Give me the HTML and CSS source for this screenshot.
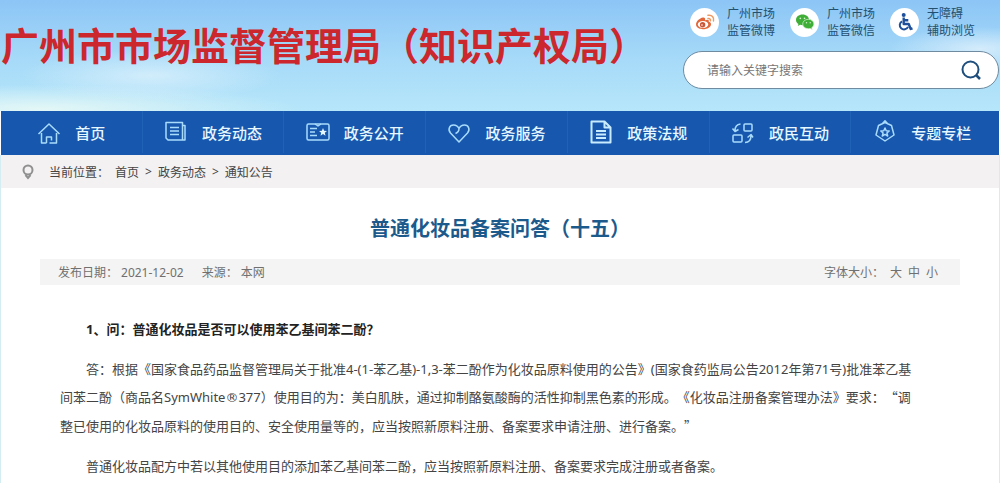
FILE: index.html
```
<!DOCTYPE html>
<html lang="zh-CN">
<head>
    <meta charset="UTF-8">
    <meta name="viewport" content="width=device-width, initial-scale=1.0">
    <title>普通化妆品备案问答（十五）</title>
    <link rel="stylesheet" href="styles.css">
</head>
<body>
    <header class="header">
        <div class="site-name">广州市市场监督管理局（知识产权局）</div>
        <div class="tools">
            <div class="social">
                <a href="#" class="social-link">
                    <span class="social-icon">
                        <svg width="22" height="22" viewBox="0 0 22 22" fill="none">
                            <path d="M9 6.500C5.500 7 2 10.500 2 13.500c0 3 3.500 4.700 7 4.700 4.500 0 8-2.300 8-5 0-1.500-1-2.200-2.300-2.500.6-1.600-.5-2.800-3.700-1.500.5-1.700-.2-2.900-2-2.700z" fill="#e2673a"/>
                            <ellipse cx="9" cy="13.500" rx="5.200" ry="3.400" fill="#fff"/>
                            <circle cx="8.600" cy="13.700" r="2.700" fill="#c9573a"/>
                            <circle cx="8" cy="14" r=".8" fill="#fff"/>
                            <path d="M14 7.500c1.800-.3 2.800.8 2.400 2.300M14 4.300c3.800-.8 6.400 2 5.500 5.600" stroke="#ee9a62" stroke-width="1.500" stroke-linecap="round"/>
                        </svg>
                    </span>
                    <span>广州市场<br>监管微博</span>
                </a>
                <a href="#" class="social-link">
                    <span class="social-icon">
                        <svg width="22" height="22" viewBox="0 0 22 22">
                            <path d="M8.500 3.500C4.800 3.500 2 5.900 2 8.900c0 1.700.9 3.100 2.400 4.100l-.6 2 2.300-1.200c.8.2 1.600.4 2.400.4 3.700 0 6.500-2.400 6.500-5.300 0-3-2.800-5.400-6.500-5.400z" fill="#3fae36"/>
                            <path d="M14.300 8.300c-3.200 0-5.600 2.100-5.600 4.700s2.400 4.700 5.600 4.700c.7 0 1.300-.1 1.900-.3l2 1.100-.5-1.800c1.400-.9 2.200-2.200 2.200-3.700 0-2.600-2.400-4.700-5.600-4.700z" fill="#3fae36" stroke="#d9f2d2" stroke-width=".7"/>
                            <circle cx="6.300" cy="7.400" r=".8" fill="#d9f2d2"/>
                            <circle cx="10.500" cy="7.400" r=".8" fill="#d9f2d2"/>
                            <circle cx="12.500" cy="11.800" r=".7" fill="#d9f2d2"/>
                            <circle cx="16.200" cy="11.800" r=".7" fill="#d9f2d2"/>
                        </svg>
                    </span>
                    <span>广州市场<br>监管微信</span>
                </a>
                <a href="#" class="social-link">
                    <span class="social-icon">
                        <svg width="22" height="22" viewBox="0 0 22 22" fill="none" stroke="#1d4f9c" stroke-width="2.400" stroke-linejoin="round">
                            <circle cx="9.700" cy="4" r="2" fill="#1d4f9c" stroke="none"/>
                            <path d="M9.700 6.500v6.500h5l2 5 1.800-.7M10 9.300h4.300"/>
                            <path d="M8 10.300a4.300 4.300 0 1 0 6 5.500" stroke-width="2"/>
                        </svg>
                    </span>
                    <span>无障碍<br>辅助浏览</span>
                </a>
            </div>
            <form class="search">
                <input type="text" class="search-input" placeholder="请输入关键字搜索" aria-label="请输入关键字搜索">
                <button type="button" class="search-btn" aria-label="搜索">
                    <svg width="22" height="22" viewBox="0 0 22 22" fill="none" stroke="#1f4e7d" stroke-width="2">
                        <circle cx="10.500" cy="10.500" r="8"/>
                        <path d="M16 16l4 4" stroke-width="2.500"/>
                    </svg>
                </button>
            </form>
        </div>
    </header>

    <nav class="nav">
        <a href="#" class="nav-item">
            <svg class="nav-icon" viewBox="0 0 24 24">
                <path d="M1.500 14L12 4l10.500 10M4.500 13v10h5M19.500 13v10h-7M9.500 23v-6h5v3.500"/>
            </svg>
            首页
        </a>
        <a href="#" class="nav-item">
            <svg class="nav-icon" viewBox="0 0 24 24">
                <path d="M2 2.500h16.500V20H4l-2-2zM18.500 5.500H21V20h-3M6 7.500h9M6 11h9M6 14.500h9"/>
            </svg>
            政务动态
        </a>
        <a href="#" class="nav-item">
            <svg class="nav-icon" viewBox="0 0 24 24">
                <rect x="1" y="4" width="22" height="16" rx="1.500"/>
                <path d="M4 8.500h7M4 12h5M4 15.500h7M9 4l3 2 3-2"/>
                <path class="solid" d="M17 8l1.100 2.700 2.900.2-2.200 1.900.7 2.900-2.500-1.600-2.500 1.600.7-2.900-2.200-1.900 2.900-.2z"/>
            </svg>
            政务公开
        </a>
        <a href="#" class="nav-item">
            <svg class="nav-icon" viewBox="0 0 24 24">
                <path d="M12 22L3.500 13C.5 9.500 2.500 5 6.500 5c2.500 0 4.500 1.500 5.500 3.500C13 6.500 15 5 17.500 5c4 0 6 4.500 3 8zM12 8.500c0 2.500-1 4-3.500 5"/>
            </svg>
            政务服务
        </a>
        <a href="#" class="nav-item">
            <svg class="nav-icon bold" viewBox="0 0 24 24">
                <path d="M2.500 1.500h13l6 6v15h-19zM15.500 1.500v6h6M7 11h10M7 14.500h10M7 18h10"/>
            </svg>
            政策法规
        </a>
        <a href="#" class="nav-item">
            <svg class="nav-icon" viewBox="0 0 24 24">
                <rect x="13" y="4" width="8" height="7" rx="1"/>
                <rect x="2" y="15" width="9" height="7" rx="1"/>
                <path d="M9.500 4C6 4.500 4 7 4 10.500M1.500 8.500L4 11.500l3.500-2M14 22.500c4 0 6-2.500 6-7M16.500 17.500L20 14.500l2 3"/>
            </svg>
            政民互动
        </a>
        <a href="#" class="nav-item">
            <svg class="nav-icon" viewBox="0 0 24 24">
                <path d="M12 2.500L5.500 5.500 3 15l9 6 9-6-2.500-9.500zM9.500 3.500L12 .8l2.500 2.700"/>
                <path d="M12 8l1.200 2.800 3 .2-2.300 2 .8 3-2.700-1.600L9.300 16l.8-3-2.300-2 3-.2z"/>
            </svg>
            专题专栏
        </a>
    </nav>

    <div class="page">
        <div class="breadcrumb">
            <svg class="pin" width="14" height="16" viewBox="0 0 14 16" fill="none" stroke="#909090" stroke-width="2">
                <circle cx="7" cy="6" r="4.500"/>
                <path d="M4.500 11L7 14l2.500-3"/>
            </svg>
            <span class="breadcrumb-label">当前位置：</span>
            <a href="#">首页</a>
            <span>&gt;</span>
            <a href="#">政务动态</a>
            <span>&gt;</span>
            <a href="#">通知公告</a>
        </div>

        <main class="article">
            <h1 class="article-title">普通化妆品备案问答（十五）</h1>
            <div class="meta">
                <span>发布日期：</span>
                <span class="meta-date">2021-12-02</span>
                <span>来源：</span>
                <span>本网</span>
                <div class="font-size">
                    <span>字体大小：</span>
                    <a href="#">大</a>
                    <a href="#">中</a>
                    <a href="#">小</a>
                </div>
            </div>
            <div class="content">
                <p><strong>1、问：普通化妆品是否可以使用苯乙基间苯二酚？</strong></p>
                <p>答：根据《国家食品药品监督管理局关于批准4-(1-苯乙基)-1,3-苯二酚作为化妆品原料使用的公告》(国家食药监局公告2012年第71号)批准苯乙基<br>间苯二酚（商品名SymWhite<span class="mark">®</span>377）使用目的为：美白肌肤，通过抑制酪氨酸酶的活性抑制黑色素的形成。《化妆品注册备案管理办法》要求：<span class="quote">“</span>调<br>整已使用的化妆品原料的使用目的、安全使用量等的，应当按照新原料注册、备案要求申请注册、进行备案。<span class="quote">”</span></p>
                <p>普通化妆品配方中若以其他使用目的添加苯乙基间苯二酚，应当按照新原料注册、备案要求完成注册或者备案。</p>
            </div>
        </main>
    </div>
</body>
</html>
```
FILE: styles.css
```
* {
    box-sizing: border-box;
}
body {
    margin: 0;
    font-family: "Noto Sans", "Noto Sans CJK SC", sans-serif;
    font-size: 12px;
    color: #444;
    background: #fff;
    text-spacing-trim: space-all;
}
a {
    color: inherit;
    text-decoration: none;
}

/* header */
.header {
    display: flex;
    justify-content: space-between;
    height: 111px;
    background:
        radial-gradient(ellipse 130px 26px at 15% 68%, rgba(225, 243, 252, 0.7), transparent),
        radial-gradient(ellipse 260px 24px at 4% 98%, rgba(232, 249, 246, 0.9), transparent),
        radial-gradient(ellipse 90px 22px at 98% 44%, rgba(225, 241, 252, 0.8), transparent),
        linear-gradient(#8cc5f6, #a5d9f8 50%, #b6e6fa);
}
.site-name {
    padding: 16px 0 0 1px;
    font-family: "Noto Sans CJK SC", sans-serif;
    font-size: 38px;
    font-weight: 700;
    line-height: 56px;
    white-space: nowrap;
    color: #cc272d;
}
.tools {
    width: 317px;
    padding-right: 1px;
}
.social {
    display: grid;
    grid-template-columns: repeat(3, 100px);
    padding: 5px 0 0 7px;
}
.social-link {
    display: flex;
    align-items: center;
    gap: 8px;
    line-height: 17px;
    white-space: nowrap;
    color: #24506f;
}
.social-icon {
    display: flex;
    align-items: center;
    justify-content: center;
    width: 29px;
    height: 29px;
    border-radius: 50%;
    background: #fff;
}
.search {
    display: flex;
    align-items: center;
    height: 38px;
    margin: 12px 0 0;
    padding: 0 16px 0 23px;
    border: 1px solid #6f8ba0;
    border-radius: 19px;
    background: #fff;
}
.search-input {
    flex: 1;
    min-width: 0;
    padding: 0;
    border: 0;
    outline: 0;
    font: inherit;
    background: none;
}
.search-input::placeholder {
    color: #777;
}
.search-btn {
    display: flex;
    padding: 0;
    border: 0;
    background: none;
    cursor: pointer;
}

/* main nav */
.nav {
    display: grid;
    grid-template-columns: repeat(7, 1fr);
    height: 44px;
    margin: 0 1px;
    padding: 0 6px 2px 0;
    background: #1758ae;
}
.nav-item {
    display: flex;
    align-items: center;
    justify-content: center;
    gap: 14px;
    font-size: 15px;
    font-weight: 500;
    color: #e6f7ff;
    border-right: 1px solid #2062b6;
}
.nav-item:last-child {
    border-right: 0;
}
.nav-icon {
    width: 24px;
    height: 24px;
    fill: none;
    stroke: #a9dbfb;
    stroke-width: 1.5;
    stroke-linejoin: round;
}
.nav-icon.bold {
    stroke: #c9ebff;
    stroke-width: 2;
}
.nav-icon .solid {
    fill: #e6f7ff;
    stroke: none;
}

/* page */
.page {
    border: solid #d3edf3;
    border-width: 0 1px;
}
.breadcrumb {
    display: flex;
    align-items: center;
    gap: 6px;
    height: 33px;
    padding: 0 20px;
    background: #f3f1f2;
}
.pin {
    margin-right: 8px;
}
.article {
    padding: 26px 39px 4px;
}
.article-title {
    margin: 0;
    font-size: 20px;
    line-height: 30px;
    text-align: center;
    color: #1d5a8c;
}
.meta {
    display: flex;
    align-items: center;
    gap: 3px;
    height: 26px;
    margin-top: 15px;
    padding: 0 22px 0 18px;
    color: #707070;
    background: #f4f4f4;
}
.meta-date {
    margin-right: 15px;
}
.font-size {
    display: flex;
    gap: 6px;
    margin-left: auto;
}
.content {
    padding: 30px 20px 0;
    font-size: 13px;
    line-height: 28px;
}
.content p {
    margin: 0 0 12px;
    text-indent: 2em;
}
.content p:last-child {
    margin-bottom: 0;
}
.content strong {
    color: #222;
}
.quote {
    font-family: "Noto Sans CJK SC", sans-serif;
}
.mark {
    font-family: "DejaVu Sans", sans-serif;
}
```
